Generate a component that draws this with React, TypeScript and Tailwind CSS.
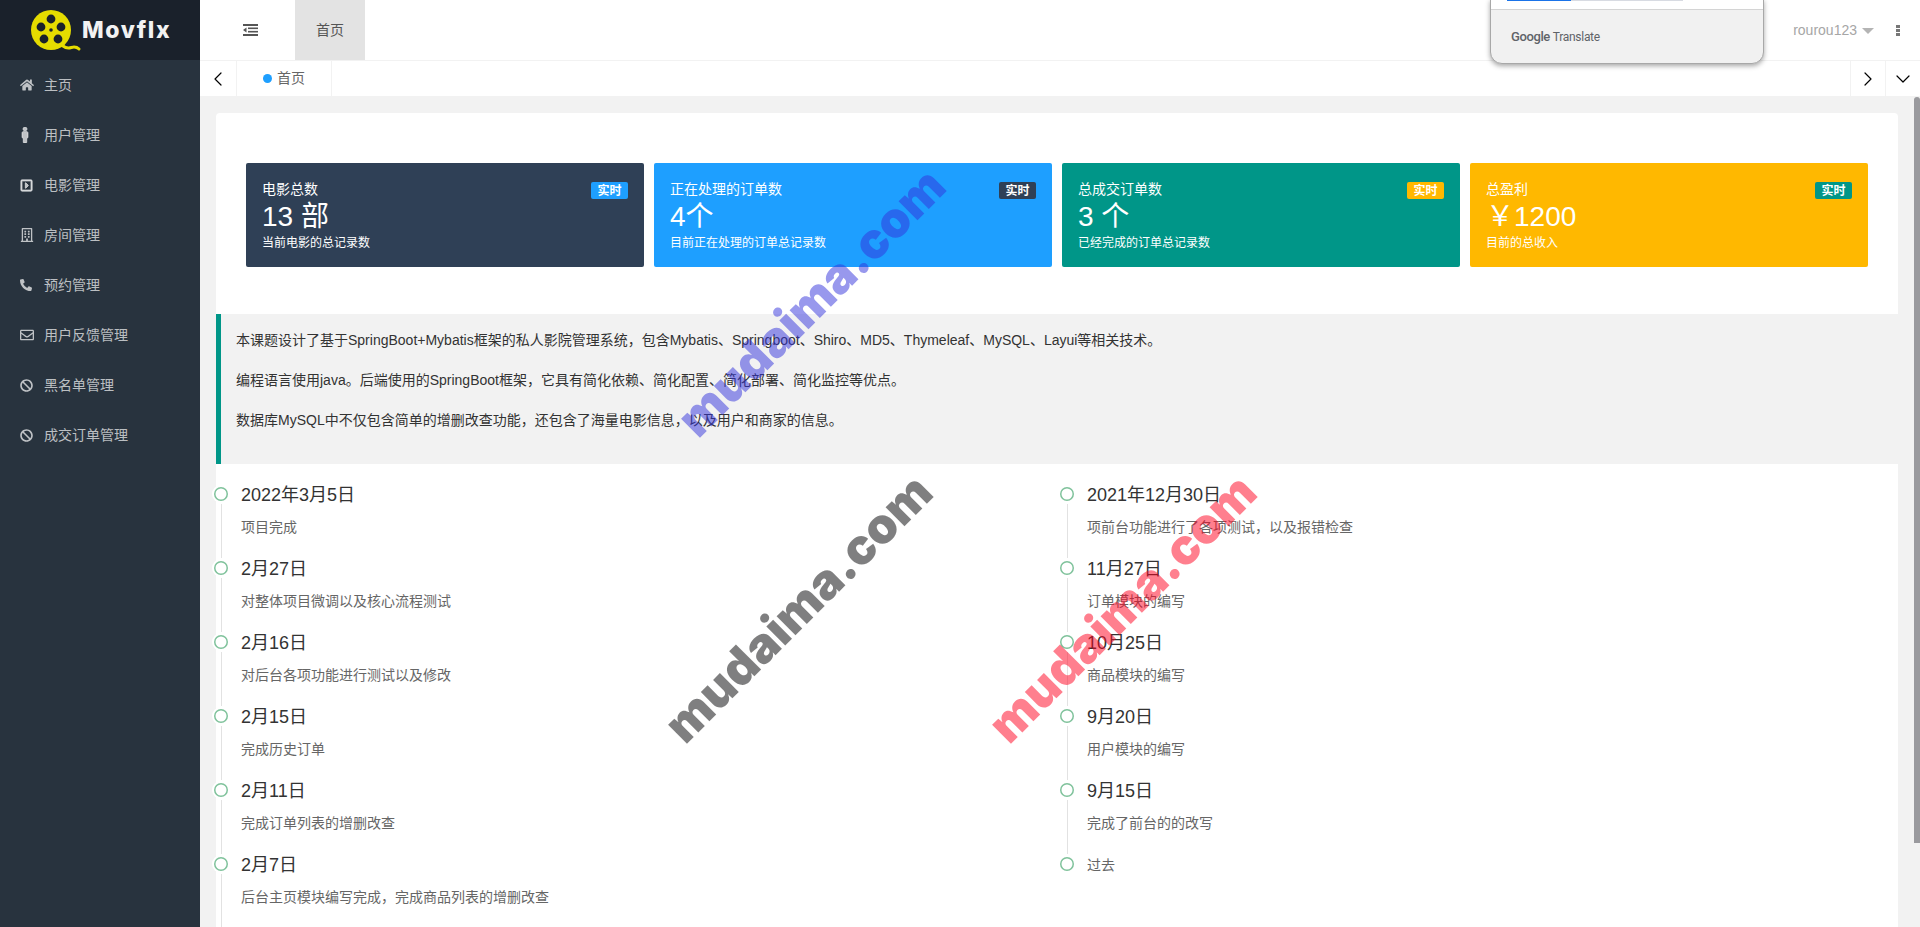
import { FaHome, FaMale, FaRegCaretSquareRight, FaRegBuilding, FaPhoneAlt, FaRegEnvelope, FaBan } from "react-icons/fa";
import { ChevronLeft, ChevronRight, ChevronDown } from "lucide-react";

const menus = [
    { name: "主页", icon: <FaHome className="h-[14px] w-[14px]" /> },
    { name: "用户管理", icon: <FaMale className="ml-[-3px] h-[16px] w-[16px]" stroke="currentColor" strokeWidth={24} /> },
    { name: "电影管理", icon: <FaRegCaretSquareRight className="h-[13px] w-[13px]" stroke="currentColor" strokeWidth={30} /> },
    { name: "房间管理", icon: <FaRegBuilding className="h-[14px] w-[14px]" /> },
    { name: "预约管理", icon: <FaPhoneAlt className="h-[12px] w-[12px]" /> },
    { name: "用户反馈管理", icon: <FaRegEnvelope className="h-[14px] w-[14px]" /> },
    { name: "黑名单管理", icon: <FaBan className="h-[13px] w-[13px]" /> },
    { name: "成交订单管理", icon: <FaBan className="h-[13px] w-[13px]" /> },
];

const stats = [
    { title: "电影总数", value: "13 部", sub: "当前电影的总记录数", card: "bg-[#2f4056]", badge: "bg-[#1e9fff]" },
    { title: "正在处理的订单数", value: "4个", sub: "目前正在处理的订单总记录数", card: "bg-[#1e9fff]", badge: "bg-[#2f4056]" },
    { title: "总成交订单数", value: "3 个", sub: "已经完成的订单总记录数", card: "bg-[#009688]", badge: "bg-[#ffb800]" },
    { title: "总盈利", value: "￥1200", sub: "目前的总收入", card: "bg-[#ffb800]", badge: "bg-[#009688]" },
];

const leftItems = [
    { title: "2022年3月5日", text: "项目完成" },
    { title: "2月27日", text: "对整体项目微调以及核心流程测试" },
    { title: "2月16日", text: "对后台各项功能进行测试以及修改" },
    { title: "2月15日", text: "完成历史订单" },
    { title: "2月11日", text: "完成订单列表的增删改查" },
    { title: "2月7日", text: "后台主页模块编写完成，完成商品列表的增删改查" },
];

const rightItems = [
    { title: "2021年12月30日", text: "项前台功能进行了各项测试，以及报错检查" },
    { title: "11月27日", text: "订单模块的编写" },
    { title: "10月25日", text: "商品模块的编写" },
    { title: "9月20日", text: "用户模块的编写" },
    { title: "9月15日", text: "完成了前台的的改写" },
];

const Dot = () => (
    <div className="absolute left-[-4px] top-[2px] flex h-[18px] w-[18px] items-center justify-center rounded-full bg-white">
        <div className="h-[14px] w-[14px] rounded-full shadow-[inset_0_0_0_1.5px_#7fc29b]"></div>
    </div>
);

const TimelineItem = ({ title, text }: { title: string; text: string }) => (
    <div className="relative h-[74px] pl-[25px]">
        <div className="absolute left-[5px] top-[21px] h-[54px] w-px bg-[#e2e2e2]"></div>
        <Dot />
        <h3 className="text-[18px] leading-6 text-[#333]">{title}</h3>
        <p className="mt-[9px] text-[14px] leading-[22px] text-[#666]">{text}</p>
    </div>
);

const Logo = () => (
    <svg className="h-[44px] w-[52px]" viewBox="0 0 52 44" fill="none">
        <path d="M33 38c5 4 8 1 11 1 2 0 4 1 5 2" stroke="#e5dc00" strokeWidth="3" strokeLinecap="round" />
        <circle cx="21" cy="22" r="20" fill="#e5dc00" />
        <circle cx="21" cy="11" r="4.4" fill="#1a212b" />
        <circle cx="11" cy="19" r="4.4" fill="#1a212b" />
        <circle cx="31" cy="19" r="4.4" fill="#1a212b" />
        <circle cx="14" cy="31" r="4.4" fill="#1a212b" />
        <circle cx="28" cy="31" r="4.4" fill="#1a212b" />
        <circle cx="21" cy="22" r="1.8" fill="#1a212b" />
    </svg>
);

const App = () => {
    return (
        <div className="relative flex h-screen w-full overflow-hidden bg-[#f2f2f2] font-['Liberation_Sans','Noto_Sans_CJK_SC',sans-serif] text-[14px]">
            <aside className="flex w-[200px] shrink-0 flex-col bg-[#28333e]">
                <div className="flex h-[60px] items-center bg-[#1a212b] pl-[30px]">
                    <Logo />
                    <span className="font-['Inter',sans-serif] text-[23px] font-extrabold tracking-[1.6px] text-[#f2f2f2]">Movflx</span>
                </div>
                {menus.map((menu, index) => (
                    <div key={index} className="flex h-[50px] items-center pl-[20px] text-[rgba(255,255,255,0.7)]">
                        <span className="flex w-[24px] shrink-0 items-center">{menu.icon}</span>
                        <span>{menu.name}</span>
                    </div>
                ))}
            </aside>

            <div className="flex min-w-0 flex-1 flex-col">
                <header className="relative flex h-[60px] shrink-0 items-center bg-white">
                    <div className="flex w-[95px] justify-center">
                        <svg className="ml-[6px] h-[12px] w-[15px]" viewBox="0 0 15 12" fill="#555">
                            <rect x="0" y="0" width="15" height="2" />
                            <rect x="5" y="3.5" width="10" height="1.6" />
                            <rect x="5" y="6.9" width="10" height="1.6" />
                            <rect x="0" y="10" width="15" height="2" />
                            <path d="M0 6l3.5-2.4v4.8z" />
                        </svg>
                    </div>
                    <div className="flex h-full w-[70px] items-center justify-center bg-[#e3e3e3] text-[#555]">首页</div>
                    <div className="ml-auto flex items-center pr-[20px] text-[#a6a6a6]">
                        <span>rourou123</span>
                        <span className="ml-[5px] mt-[2px] h-0 w-0 border-x-[6px] border-t-[6px] border-x-transparent border-t-[#b4b4b4]"></span>
                        <span className="ml-[22px] flex flex-col gap-[1px]">
                            <span className="h-[3px] w-[4px] bg-[#777]"></span>
                            <span className="h-[3px] w-[4px] bg-[#777]"></span>
                            <span className="h-[3px] w-[4px] bg-[#777]"></span>
                        </span>
                    </div>
                    {/* translate popup from the browser */}
                    <div className="absolute left-[1290px] top-[-1px] z-20 h-[65px] w-[274px] overflow-hidden rounded-b-[12px] border border-[#a8a8a8] bg-[#f1f1f1] shadow-[0_2px_5px_rgba(0,0,0,0.35)]">
                        <div className="h-[10px] border-b border-[#d4d4d4] bg-white pl-[16px]">
                            <div className="flex h-[1px] w-[176px] bg-[#d8dbe2]">
                                <div className="h-[1px] w-[64px] bg-[#1a73e8]"></div>
                            </div>
                        </div>
                        <div className="mt-[17px] flex items-center pl-[20px] font-['Roboto',sans-serif] text-[#5f6368]">
                            <span className="text-[13px] font-medium tracking-[-0.4px]">Google</span>
                            <span className="ml-[3px] text-[12px] tracking-[-0.3px]">Translate</span>
                        </div>
                    </div>
                </header>

                <div className="flex h-[36px] shrink-0 border-t border-[#f2f2f2] bg-white text-[#666]">
                    <div className="flex w-[37px] items-center justify-center border-r border-[#f2f2f2] text-black">
                        <ChevronLeft className="h-[24px] w-[24px]" strokeWidth={1.2} />
                    </div>
                    <div className="flex w-[95px] items-center border-r border-[#f2f2f2] pl-[26px]">
                        <span className="mr-[5px] h-[9px] w-[9px] rounded-full bg-[#1e9fff]"></span>
                        <span className="text-[14px]">首页</span>
                    </div>
                    <div className="ml-auto flex w-[35px] items-center justify-center border-l border-[#f2f2f2] text-black">
                        <ChevronRight className="h-[24px] w-[24px]" strokeWidth={1.2} />
                    </div>
                    <div className="flex w-[35px] items-center justify-center border-l border-[#f2f2f2] text-black">
                        <ChevronDown className="h-[24px] w-[24px]" strokeWidth={1.2} />
                    </div>
                </div>

                <main className="relative min-h-0 flex-1 pl-[16px] pt-[17px]">
                    <div className="w-[1682px] rounded-t-[4px] bg-white pt-[50px]">
                        <div className="grid grid-cols-4 gap-[10px] px-[30px]">
                            {stats.map((stat, index) => (
                                <div key={index} className={`relative h-[104px] rounded-[2px] pl-[16px] pt-[16px] text-white ${stat.card}`}>
                                    <div className="text-[14px] leading-5">{stat.title}</div>
                                    <div className="text-[28px] leading-9">{stat.value}</div>
                                    <div className="text-[12px] leading-4">{stat.sub}</div>
                                    <span className={`absolute right-[16px] top-[19px] flex h-[17px] w-[37px] items-center justify-center rounded-[2px] text-[12px] font-bold ${stat.badge}`}>实时</span>
                                </div>
                            ))}
                        </div>

                        <blockquote className="mt-[47px] border-l-[5px] border-[#009688] bg-[#f2f2f2] p-[15px] text-[14px] leading-[22px] text-[#333]">
                            <p className="mb-[18px]">本课题设计了基于SpringBoot+Mybatis框架的私人影院管理系统，包含Mybatis、Springboot、Shiro、MD5、Thymeleaf、MySQL、Layui等相关技术。</p>
                            <p className="mb-[18px]">编程语言使用java。后端使用的SpringBoot框架，它具有简化依赖、简化配置、简化部署、简化监控等优点。</p>
                            <p className="mb-[18px]">数据库MySQL中不仅包含简单的增删改查功能，还包含了海量电影信息，以及用户和商家的信息。</p>
                        </blockquote>

                        <div className="flex pb-[40px] pt-[19px]">
                            <div className="w-[846px]">
                                {leftItems.map((item, index) => (
                                    <TimelineItem key={index} title={item.title} text={item.text} />
                                ))}
                            </div>
                            <div className="w-[836px]">
                                {rightItems.map((item, index) => (
                                    <TimelineItem key={index} title={item.title} text={item.text} />
                                ))}
                                <div className="relative pl-[25px]">
                                    <Dot />
                                    <div className="leading-6 text-[#666]">过去</div>
                                </div>
                            </div>
                        </div>
                    </div>
                    {/* scrollbar thumb */}
                    <div className="absolute right-0 top-[1px] h-[746px] w-[6px] rounded-t-[3px] bg-[#9a9a9e]"></div>
                </main>
            </div>

            {/* watermarks */}
            <div className="pointer-events-none absolute left-[811px] top-[302px] z-10 -translate-x-1/2 -translate-y-1/2 -rotate-45 whitespace-nowrap font-['Inter',sans-serif] text-[49px] font-black leading-none text-[rgba(50,50,220,0.5)]">mudaima.com</div>
            <div className="pointer-events-none absolute left-[798px] top-[608px] z-10 -translate-x-1/2 -translate-y-1/2 -rotate-45 whitespace-nowrap font-['Inter',sans-serif] text-[49px] font-black leading-none text-[rgba(0,0,2,0.5)]">mudaima.com</div>
            <div className="pointer-events-none absolute left-[1122px] top-[608px] z-10 -translate-x-1/2 -translate-y-1/2 -rotate-45 whitespace-nowrap font-['Inter',sans-serif] text-[49px] font-black leading-none text-[rgba(255,0,30,0.5)]">mudaima.com</div>
        </div>
    );
};

export default App;
